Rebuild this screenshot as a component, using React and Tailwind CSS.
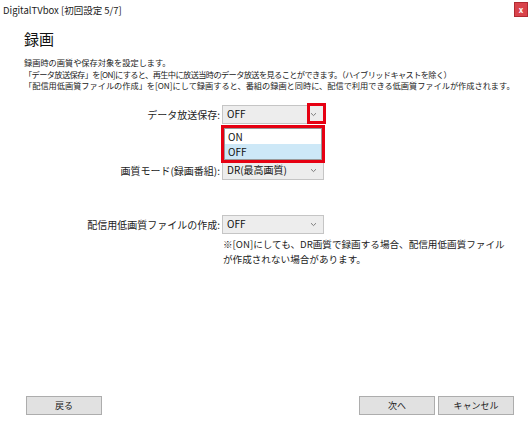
import React from "react";

const font = { fontFamily: '"Noto Sans CJK JP", "Noto Sans", sans-serif' };

function Chevron() {
  return (
    <svg width="7" height="5" viewBox="0 0 7 5" className="block">
      <path d="M1 1.2 L3.5 3.6 L6 1.2" fill="none" stroke="#707070" strokeWidth="0.9" />
    </svg>
  );
}

function Select({ value, children }) {
  return (
    <div className="relative w-[102px] h-[19px]">
      <div className="flex items-center h-full border border-[#c5c5c5] bg-[#ededed] pl-[4px] pr-[6px] text-[10px] text-[#111]">
        <span className="flex-1 leading-none">{value}</span>
        <Chevron />
      </div>
      {children}
    </div>
  );
}

function Row({ label, value, children, note }) {
  return (
    <div className="flex items-start">
      <div className="w-[222px] pr-[2px] h-[19px] flex items-center justify-end text-[10px] text-[#222]">{label}</div>
      <div className="flex flex-col">
        <Select value={value}>{children}</Select>
        {note}
      </div>
    </div>
  );
}

function Btn({ children }) {
  return (
    <div className="h-[19px] w-[76px] border border-[#adadad] bg-[#e1e1e1] flex items-center justify-center text-[9px] text-[#222]">
      {children}
    </div>
  );
}

export default function App() {
  return (
    <div className="w-[531px] h-[424px] bg-white flex flex-col relative overflow-hidden" style={font}>
      <div className="h-[22px] flex items-center justify-between pl-[3px] pr-[3px]">
        <span className="text-[9.5px] text-[#222] -mt-[1px]">DigitalTVbox [初回設定 5/7]</span>
        <div className="w-[14px] h-[15px] bg-[#d9434b] border border-[#b02a32] flex items-center justify-center text-white text-[8px] font-bold leading-none self-start mt-[2px]">x</div>
      </div>
      <div className="pl-[24px] pt-[7px]">
        <div className="text-[15px] leading-[20px] text-[#111] font-normal">録画</div>
        <div className="mt-[8px] text-[8.2px] leading-[11.5px] text-[#222] whitespace-nowrap">
          <div>録画時の画質や保存対象を設定します。</div>
          <div className="tracking-[-0.6px]">「データ放送保存」を[ON]にすると、再生中に放送当時のデータ放送を見ることができます。（ハイブリッドキャストを除く）</div>
          <div>「配信用低画質ファイルの作成」を[ON]にして録画すると、番組の録画と同時に、配信で利用できる低画質ファイルが作成されます。</div>
        </div>
      </div>
      <div className="flex flex-col mt-[13px]">
        <div className="relative z-10">
          <Row label="データ放送保存:" value="OFF">
            <div className="absolute right-[-2px] top-[-2px] w-[19px] h-[21px] border-[3px] border-[#e60012]" />
            <div className="absolute left-[-1px] top-[20px] w-[104px] h-[38px] border-[3px] border-[#e60012] bg-white">
              <div className="h-full border border-[#999] flex flex-col text-[10px] text-[#111]">
                <div className="h-[17px] flex items-center pl-[3px]">ON</div>
                <div className="flex-1 flex items-center pl-[3px] bg-[#cde8f7]">OFF</div>
              </div>
            </div>
          </Row>
        </div>
        <div className="mt-[37px]">
          <Row label="画質モード(録画番組):" value="DR(最高画質)" />
        </div>
        <div className="mt-[35px]">
          <Row
            label="配信用低画質ファイルの作成:"
            value="OFF"
            note={
              <div className="mt-[3px] text-[9.6px] leading-[15px] text-[#222] whitespace-nowrap pl-[1px]">
                <div>※[ON]にしても、DR画質で録画する場合、配信用低画質ファイル</div>
                <div>が作成されない場合があります。</div>
              </div>
            }
          />
        </div>
      </div>
      <div className="mt-auto mb-[9px] flex items-center px-[26px]">
        <Btn>戻る</Btn>
        <div className="flex-1" />
        <div className="flex gap-[3px] mr-[-9px]">
          <Btn>次へ</Btn>
          <Btn>キャンセル</Btn>
        </div>
      </div>
    </div>
  );
}
